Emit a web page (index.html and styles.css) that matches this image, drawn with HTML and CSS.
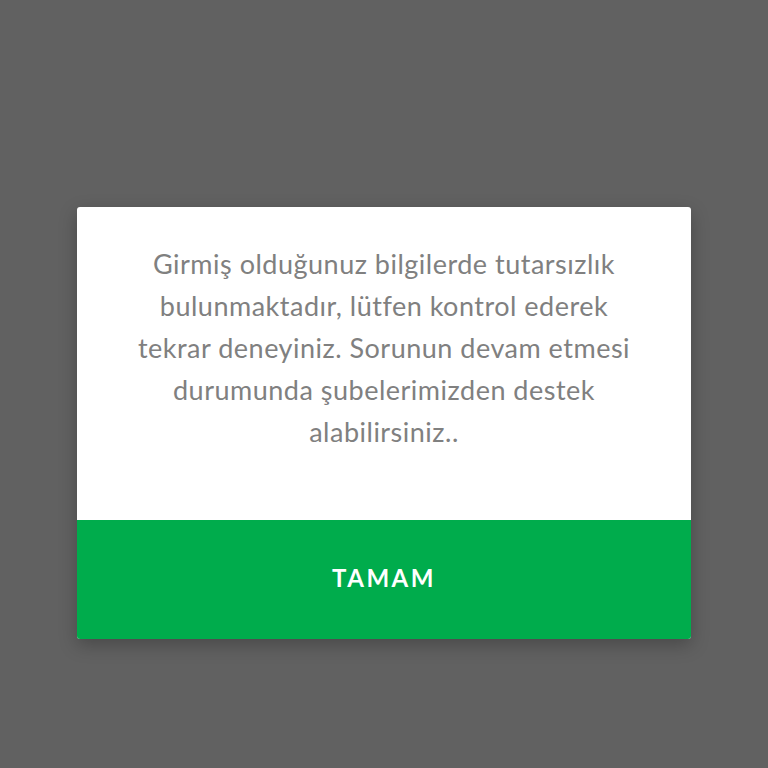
FILE: index.html
```html
<!DOCTYPE html>
<html lang="tr">
<head>
    <meta charset="UTF-8">
    <title>Uyarı</title>
    <link rel="stylesheet" href="styles.css">
</head>
<body>
    <div class="overlay">
        <div class="dialog">
            <p class="dialog-message">
                Girmiş olduğunuz bilgilerde tutarsızlık<br>
                bulunmaktadır, lütfen kontrol ederek<br>
                tekrar deneyiniz. Sorunun devam etmesi<br>
                durumunda şubelerimizden destek<br>
                alabilirsiniz..
            </p>
            <button class="dialog-button" type="button">TAMAM</button>
        </div>
    </div>
</body>
</html>
```

FILE: styles.css
```css
* {
    margin: 0;
    padding: 0;
    box-sizing: border-box;
}

body {
    background: #616161;
    font-family: Lato, "Open Sans", sans-serif;
}

.overlay {
    height: 768px;
    padding-top: 207px;
    padding-left: 77px;
}

.dialog {
    width: 614px;
    background: #ffffff;
    border-radius: 3px;
    overflow: hidden;
    box-shadow: 0 6px 18px rgba(0, 0, 0, 0.25);
}

.dialog-message {
    height: 313px;
    padding-top: 36px;
    text-align: center;
    font-size: 27px;
    letter-spacing: 0.5px;
    line-height: 42px;
    color: #808080;
}

.dialog-button {
    display: block;
    width: 100%;
    height: 119px;
    border: none;
    background: #00ac4c;
    color: #ffffff;
    font-family: inherit;
    font-size: 24px;
    font-weight: bold;
    letter-spacing: 2.5px;
    padding-bottom: 4px;
}
```
